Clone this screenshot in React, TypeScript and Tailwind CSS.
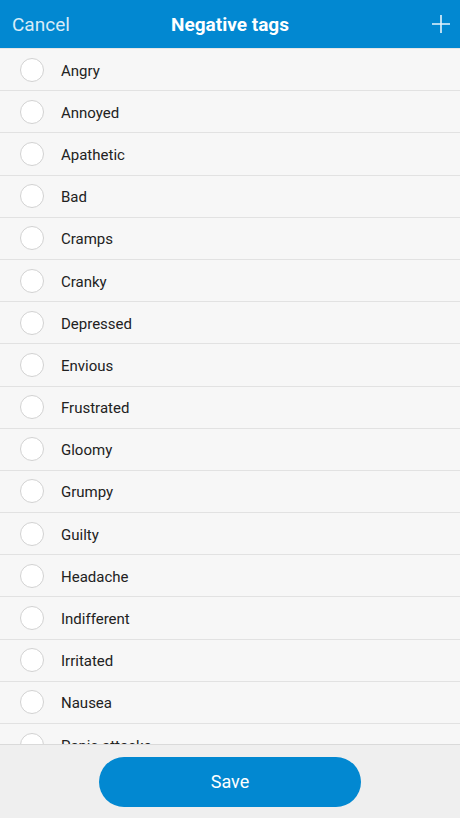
import React from "react";

const tags = [
  "Angry",
  "Annoyed",
  "Apathetic",
  "Bad",
  "Cramps",
  "Cranky",
  "Depressed",
  "Envious",
  "Frustrated",
  "Gloomy",
  "Grumpy",
  "Guilty",
  "Headache",
  "Indifferent",
  "Irritated",
  "Nausea",
  "Panic attacks",
  "Sad",
];

export default function App() {
  return (
    <div
      className="w-[460px] h-[818px] flex flex-col bg-[#f7f7f7] overflow-hidden"
      style={{ fontFamily: "Roboto, 'Noto Sans', sans-serif" }}
    >
      <header className="h-[49px] shrink-0 bg-[#0288d1] border-b border-[#e6e6e6] flex items-center relative">
        <span className="absolute left-[12px] top-[12px] text-[19px] leading-[26px] text-[#d8ecf8]">
          Cancel
        </span>
        <h1 className="w-full text-center text-[19px] leading-[26px] font-bold text-white mt-[1px]">
          Negative tags
        </h1>
        <svg
          className="absolute left-[431px] top-[14px]"
          width="20"
          height="20"
          viewBox="0 0 20 20"
        >
          <path d="M10 1V19M1 10H19" stroke="#e6f3fb" strokeWidth="1.6" />
        </svg>
      </header>
      <div className="flex-1 overflow-hidden">
        {tags.map((t) => (
          <div
            key={t}
            className="h-[42.2px] flex items-center border-b border-[#e2e2e2] bg-[#f7f7f7]"
          >
            <span className="ml-[20px] w-[24px] h-[24px] rounded-full border border-[#d2d2d2] bg-white" />
            <span className="ml-[17px] text-[15px] leading-[20px] pt-[2px] text-[#222222]">
              {t}
            </span>
          </div>
        ))}
      </div>
      <footer className="h-[74px] shrink-0 bg-[#efefef] border-t border-[#dadada] flex items-center justify-center">
        <button className="w-[262px] h-[50px] rounded-full bg-[#0288d1] text-white text-[18px] leading-[24px]">
          Save
        </button>
      </footer>
    </div>
  );
}
